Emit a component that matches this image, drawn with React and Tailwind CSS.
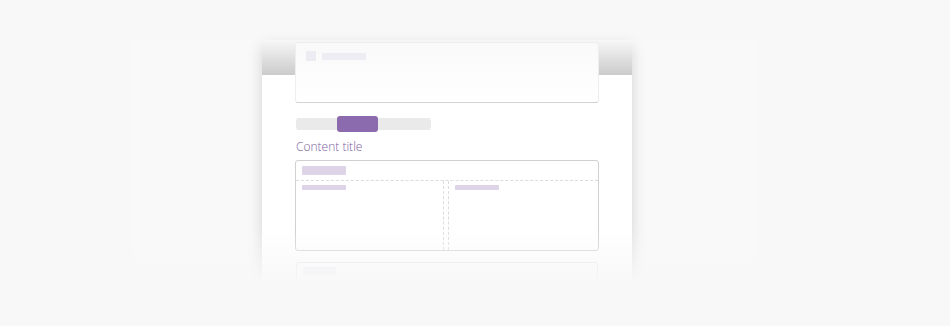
import React from "react";

function Bar({ className }) {
  return <div className={`rounded-[1px] ${className}`} />;
}

function TopBox() {
  return (
    <div className="ml-[33px] mt-[2px] h-[61px] w-[304px] rounded-[3px] border border-[#eeeeee] border-b-[#d2d2d2] bg-gradient-to-b from-[#f9f9f9] to-white">
      <div className="flex items-center gap-[6px] pl-[10px] pt-[8px]">
        <div className="h-[10px] w-[10px] bg-[#eeecf3]" />
        <Bar className="h-[7px] w-[44px] bg-[#efedf4]" />
      </div>
    </div>
  );
}

function Tabs() {
  return (
    <div className="ml-[34px] mt-[13px] flex h-[16px] w-[135px] items-center">
      <div className="relative h-[12px] w-full rounded-[3px] bg-[#eaeaea]">
        <div className="absolute left-[41px] top-[-2px] h-[16px] w-[41px] rounded-[3px] bg-[#8c6aae]" />
      </div>
    </div>
  );
}

function ColumnsBox() {
  return (
    <div className="ml-[33px] mt-[5px] h-[91px] w-[304px] rounded-[3px] border border-[#d0d0d0] bg-white">
      <div className="h-[20px] border-b border-dashed border-[#dcdcdc] pl-[6px] pt-[5px]">
        <Bar className="h-[9px] w-[44px] bg-[#ddd5e7]" />
      </div>
      <div className="flex h-[69px]">
        <div className="w-[148px] border-r border-dashed border-[#dcdcdc] pl-[6px] pt-[4px]">
          <Bar className="h-[5px] w-[44px] bg-[#ddd5e7]" />
        </div>
        <div className="ml-[4px] flex-1 border-l border-dashed border-[#dcdcdc] pl-[6px] pt-[4px]">
          <Bar className="h-[5px] w-[44px] bg-[#ddd5e7]" />
        </div>
      </div>
    </div>
  );
}

function LowerBox() {
  return (
    <div className="ml-[34px] mt-[11px] h-[40px] w-[302px] rounded-[3px] border border-[#e4e4e4] bg-white pl-[6px] pt-[4px]">
      <Bar className="h-[8px] w-[33px] bg-[#eeebf3]" />
    </div>
  );
}

export default function App() {
  return (
    <div className="relative h-[326px] w-[950px] overflow-hidden bg-[#f8f8f8] pl-[132px] pt-[40px]">
      {/* back panel */}
      <div className="flex h-[243px] w-[625px] justify-center bg-[#f9f9f9] pl-[5px]">
        {/* main card */}
        <div className="h-[243px] w-[370px] overflow-hidden bg-[linear-gradient(to_bottom,#f7f7f7_0px,#cbcbcb_35px,#ffffff_35px)] shadow-[0_6px_14px_rgba(0,0,0,0.15)]">
          <TopBox />
          <Tabs />
          <p className="ml-[34px] mt-[6px] h-[17px] font-['Open_Sans',sans-serif] text-[12px] font-light leading-[17px] text-[#7c60a0]">
            Content title
          </p>
          <ColumnsBox />
          <LowerBox />
        </div>
      </div>
      {/* bottom fade */}
      <div className="pointer-events-none absolute left-0 top-[228px] h-[98px] w-full bg-[linear-gradient(to_bottom,rgba(248,248,248,0)_0px,#f8f8f8_56px)]" />
    </div>
  );
}
